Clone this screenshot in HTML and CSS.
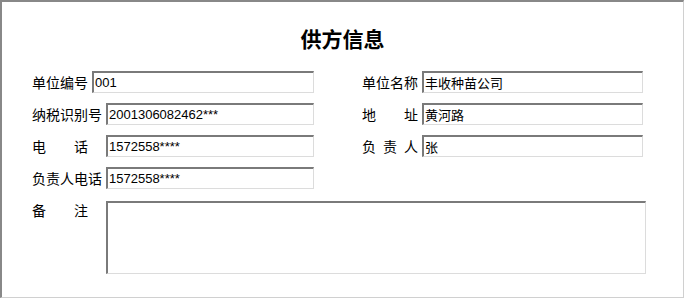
FILE: index.html
```html
<!DOCTYPE html>
<html lang="zh-CN">
<head>
    <meta charset="UTF-8">
    <title>供方信息</title>
    <link rel="stylesheet" href="styles.css">
</head>
<body>
    <div class="panel">
        <h1 class="title">供方信息</h1>
        <div class="form">
            <div class="row">
                <label class="lbl">单位编号</label>
                <input class="field" type="text" value="001">
            </div>
            <div class="row">
                <label class="lbl">单位名称</label>
                <input class="field" type="text" value="丰收种苗公司">
            </div>
            <div class="row">
                <label class="lbl">纳税识别号</label>
                <input class="field" type="text" value="2001306082462***">
            </div>
            <div class="row">
                <label class="lbl spread">地 址</label>
                <input class="field" type="text" value="黄河路">
            </div>
            <div class="row">
                <label class="lbl spread wide">电 话</label>
                <input class="field" type="text" value="1572558****">
            </div>
            <div class="row">
                <label class="lbl spread">负 责 人</label>
                <input class="field" type="text" value="张">
            </div>
            <div class="row">
                <label class="lbl">负责人电话</label>
                <input class="field" type="text" value="1572558****">
            </div>
            <div class="row"></div>
            <div class="row remark">
                <label class="lbl spread wide">备 注</label>
                <textarea class="memo"></textarea>
            </div>
        </div>
    </div>
</body>
</html>
```

FILE: styles.css
```css
* {
    box-sizing: border-box;
}
body {
    margin: 0;
    background-color: #FFFFFF;
    font-family: "Noto Sans CJK SC", sans-serif;
    color: #000000;
}
.panel {
    width: 684px;
    height: 298px;
    border-top: 2px solid #888888;
    border-left: 2px solid #888888;
    border-right: 1px solid #D0D0D0;
    border-bottom: 1px solid #D0D0D0;
    padding: 20px 0 0 30px;
}
.title {
    margin: 0 0 17px 0;
    padding-right: 30px;
    text-align: center;
    font-size: 21px;
    line-height: 32px;
    font-weight: bold;
}
.form {
    display: grid;
    grid-template-columns: 282px 281px;
    column-gap: 48px;
    row-gap: 10px;
}
.row {
    display: flex;
    align-items: center;
    gap: 4px;
    height: 22px;
}
.lbl {
    font-size: 14px;
    line-height: 22px;
    white-space: nowrap;
    flex-shrink: 0;
}
.spread {
    width: 56px;
    text-align: justify;
    text-align-last: justify;
}
.wide {
    margin-right: 14px;
}
.field {
    flex: 1;
    min-width: 0;
    height: 22px;
    margin: 0;
    padding: 0 0 0 1px;
    border-top: 2px solid #7A7A7A;
    border-left: 2px solid #7A7A7A;
    border-right: 1px solid #DCDCDC;
    border-bottom: 1px solid #DCDCDC;
    font-family: "Liberation Sans", "Noto Sans CJK SC", sans-serif;
    font-size: 13px;
    color: #000000;
    outline: none;
}
.remark {
    grid-column: 1 / span 2;
    align-items: flex-start;
    height: auto;
}
.memo {
    flex-shrink: 0;
    width: 540px;
    height: 73px;
    margin: 2px 0 0 0;
    padding: 0;
    border-top: 2px solid #7A7A7A;
    border-left: 2px solid #7A7A7A;
    border-right: 1px solid #DCDCDC;
    border-bottom: 1px solid #DCDCDC;
    resize: none;
    outline: none;
}
```
